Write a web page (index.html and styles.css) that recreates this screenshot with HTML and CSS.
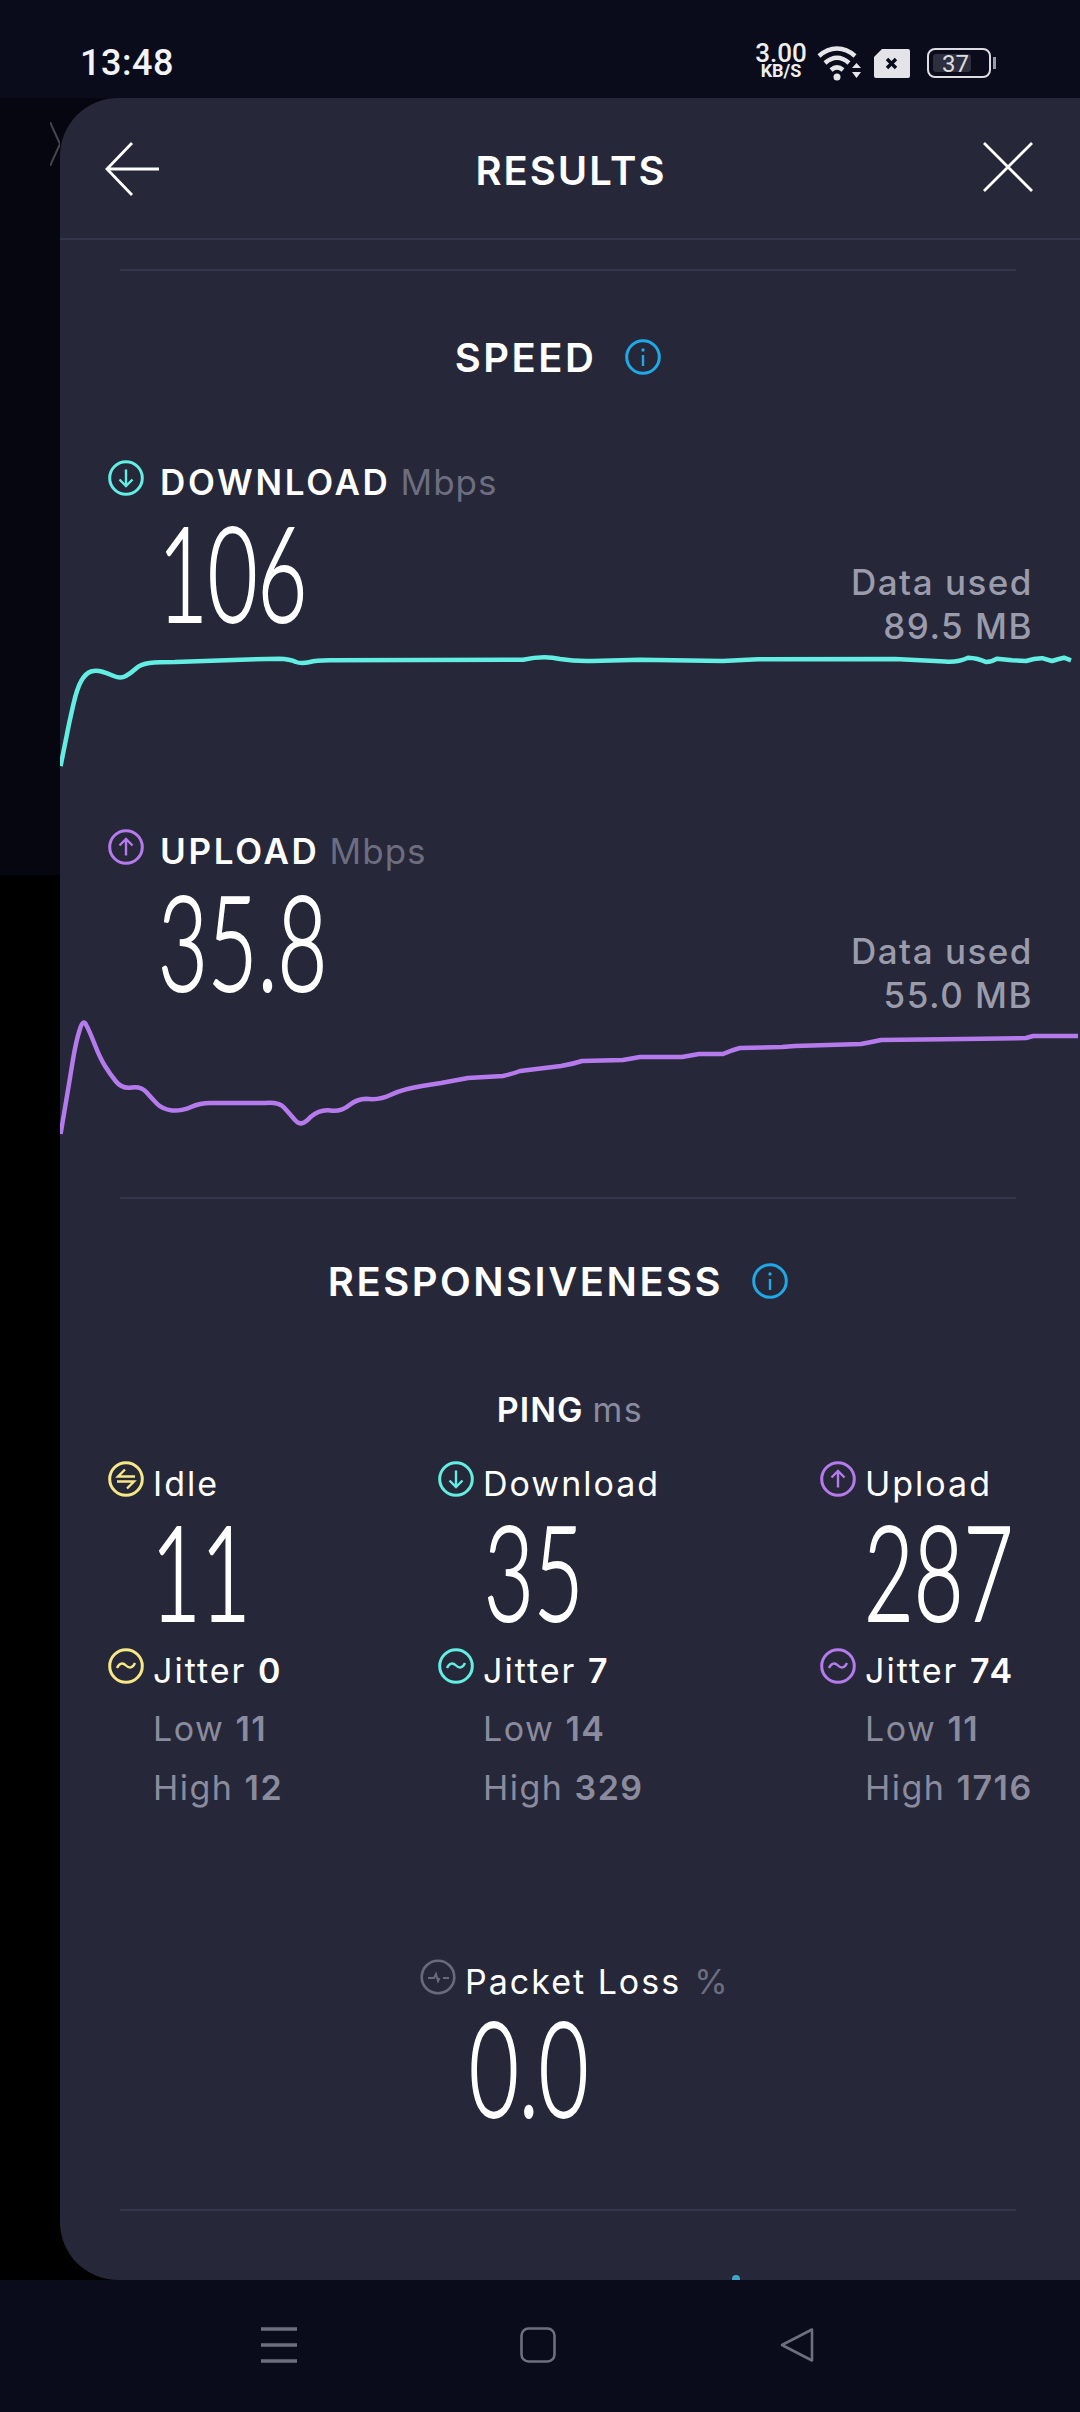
FILE: index.html
```html
<!DOCTYPE html>
<html lang="en">
<head>
  <meta charset="UTF-8" />
  <meta name="viewport" content="width=device-width, initial-scale=1" />
  <title>Results</title>
  <link rel="stylesheet" href="styles.css">
</head>
<body>

  <!-- icon set -->
  <svg class="defs" width="0" height="0">
    <symbol id="i-down" viewBox="0 0 36 36">
      <circle cx="18" cy="18" r="16.3" fill="none" stroke="currentColor" stroke-width="3"/>
      <path d="M18 9.5V26M11.5 19.5L18 26l6.5-6.5" fill="none" stroke="currentColor" stroke-width="2.4"/>
    </symbol>
    <symbol id="i-up" viewBox="0 0 36 36">
      <circle cx="18" cy="18" r="16.3" fill="none" stroke="currentColor" stroke-width="3"/>
      <path d="M18 26.5V10M11.5 16.5L18 10l6.5 6.5" fill="none" stroke="currentColor" stroke-width="2.4"/>
    </symbol>
    <symbol id="i-idle" viewBox="0 0 36 36">
      <circle cx="18" cy="18" r="16.3" fill="none" stroke="currentColor" stroke-width="3"/>
      <path d="M17 8.500L10 15.500H27M9 20.500H26L19 27.500" fill="none" stroke="currentColor" stroke-width="2.400"/>
    </symbol>
    <symbol id="i-jitter" viewBox="0 0 36 36">
      <circle cx="18" cy="18" r="16.3" fill="none" stroke="currentColor" stroke-width="3"/>
      <path d="M9 20c2.500-5.500 6-5.500 9-2.500s6.500 3 9-2.500" fill="none" stroke="currentColor" stroke-width="2.400"/>
    </symbol>
    <symbol id="i-loss" viewBox="0 0 36 36">
      <circle cx="18" cy="18" r="16.300" fill="none" stroke="currentColor" stroke-width="2.600"/>
      <path d="M8 19h6l2-4 2 7 1.500-3M23 19h6" fill="none" stroke="currentColor" stroke-width="2"/>
    </symbol>
    <symbol id="i-info" viewBox="0 0 36 36">
      <circle cx="18" cy="18" r="16.300" fill="none" stroke="currentColor" stroke-width="3"/>
      <path d="M18 16v11" fill="none" stroke="currentColor" stroke-width="2.400"/>
      <circle cx="18" cy="11" r="1.700" fill="currentColor"/>
    </symbol>
  </svg>

  <header class="status-bar">
    <span class="clock">13:48</span>
    <div class="status-icons">
      <div class="net-speed"><b>3.00</b><small>KB/S</small></div>
      <svg class="wifi" width="46" height="36" viewBox="0 0 46 36">
        <path d="M2 11C13 1 27 1 38 11" fill="none" stroke="#e6e6ea" stroke-width="4.500"/>
        <path d="M8 18c8-7 16-7 24 0" fill="none" stroke="#e6e6ea" stroke-width="4.500"/>
        <path d="M14 25c4-3.500 8-3.500 12 0" fill="none" stroke="#e6e6ea" stroke-width="4.500"/>
        <circle cx="20" cy="32" r="3.500" fill="#e6e6ea"/>
        <path d="M35 23l4.500-5 4.500 5zM35 27h9l-4.500 6z" fill="#e6e6ea"/>
      </svg>
      <svg class="sim" width="36" height="29" viewBox="0 0 36 29">
        <path d="M8 0H34a2 2 0 0 1 2 2V27a2 2 0 0 1-2 2H2a2 2 0 0 1-2-2V8z" fill="#e3e3e8"/>
        <path d="M13 10l9 9M22 10l-9 9" stroke="#0a0c1c" stroke-width="3.400"/>
      </svg>
      <div class="battery"><div class="battery-fill">37</div></div>
    </div>
  </header>

  <div class="stage">
    <svg class="ghost-x" width="10" height="44" viewBox="0 0 10 44">
      <path d="M0 0L20 44M0 44L20 0" stroke="#44454d" stroke-width="2"/>
    </svg>

    <main class="card">
      <div class="top-bar">
        <svg width="54" height="54" viewBox="0 0 54 54">
          <path d="M27 1L2 27L27 53M2 27H54" fill="none" stroke="#fff" stroke-width="2.800"/>
        </svg>
        <h1>RESULTS</h1>
        <svg width="50" height="50" viewBox="0 0 50 50">
          <path d="M1 1L49 49M49 1L1 49" fill="none" stroke="#fff" stroke-width="2.800"/>
        </svg>
      </div>

      <hr class="divider first" />

      <h2 class="section-title speed-title"><span>SPEED</span><svg class="info"><use href="#i-info"/></svg></h2>

      <section class="speed download">
        <div class="speed-info">
          <div>
            <div class="speed-label">
              <svg class="icon teal"><use href="#i-down"/></svg>
              <strong>DOWNLOAD</strong><span class="unit">Mbps</span>
            </div>
            <div class="big indent">106</div>
          </div>
          <div class="data-used">Data used<br>89.5 MB</div>
        </div>
        <svg class="chart" width="1020" height="120" viewBox="0 0 1020 120">
          <path class="chart-line line-teal" d="M0.600 115L9 73L13 55Q17 37 21.500 29.500Q26 22 31 20.500Q36 19 41.500 20.500Q47 22 53.750 25Q60.500 28 65.750 25Q71 22 76 17.500Q81 13 89.500 12Q98 11 115 11L181 8.700L219 7.700Q230 8 236 11Q241 13 250 11Q255 9.500 270 9.300L463 8.700Q484 4 500 8Q515 10.500 532 10L580 8.700L663 10L698 8.300L835 8L885 10.500Q898 11.500 908 6.700Q918 7 926 11Q932 11 937 7.700L952 9.300L966 10Q975 7 983 7.300L992 10Q998 8 1004 6.700L1011 9.300"/>
        </svg>
      </section>

      <section class="speed upload">
        <div class="speed-info">
          <div>
            <div class="speed-label">
              <svg class="icon purple"><use href="#i-up"/></svg>
              <strong>UPLOAD</strong><span class="unit">Mbps</span>
            </div>
            <div class="big indent">35.8</div>
          </div>
          <div class="data-used">Data used<br>55.0 MB</div>
        </div>
        <svg class="chart" width="1020" height="125" viewBox="0 0 1020 125">
          <path class="chart-line line-purple" d="M0.600 118L9 68L12.500 46.500Q16 25 19.500 14.500Q23 2 26.250 9Q29.500 15 34.750 28.500Q40 42 45 50Q50 58 56 65.500Q62 73 71.500 71.500Q81 70 86.250 76Q91.500 82 96.750 87.500Q102 93 112 94.500Q122.500 95 131 91Q140 87 150 87L205 87Q219 86 224 91.500Q229 97 235 104Q241 112 250.500 101Q260 93 270.500 94.500Q281 96 289.500 89Q298 82 309 83Q320 84 331.500 78.500Q343 73 362 70L381 67L408 62L443 60Q452 58 460 55L501 50Q513 48 522 45L563 44L580 41L622 41L639 38L663 38Q672 34 680 32L722 31L735 30L801 28Q812 26 821 24L904 23L966 22L973 20L1018 20"/>
        </svg>
      </section>

      <hr class="divider second" />

      <h2 class="section-title resp-title"><span>RESPONSIVENESS</span><svg class="info"><use href="#i-info"/></svg></h2>

      <div class="ping-title"><strong>PING</strong><span class="unit light">ms</span></div>

      <section class="ping-grid">
        <div class="ping-col">
          <div class="ping-row"><svg class="icon yellow"><use href="#i-idle"/></svg><span>Idle</span></div>
          <div class="big small-gap">11</div>
          <div class="ping-row"><svg class="icon yellow"><use href="#i-jitter"/></svg><span>Jitter <b>0</b></span></div>
          <div class="ping-sub">Low <b>11</b></div>
          <div class="ping-sub">High <b>12</b></div>
        </div>
        <div class="ping-col">
          <div class="ping-row"><svg class="icon teal"><use href="#i-down"/></svg><span>Download</span></div>
          <div class="big small-gap">35</div>
          <div class="ping-row"><svg class="icon teal"><use href="#i-jitter"/></svg><span>Jitter <b>7</b></span></div>
          <div class="ping-sub">Low <b>14</b></div>
          <div class="ping-sub">High <b>329</b></div>
        </div>
        <div class="ping-col">
          <div class="ping-row"><svg class="icon purple"><use href="#i-up"/></svg><span>Upload</span></div>
          <div class="big small-gap">287</div>
          <div class="ping-row"><svg class="icon purple"><use href="#i-jitter"/></svg><span>Jitter <b>74</b></span></div>
          <div class="ping-sub">Low <b>11</b></div>
          <div class="ping-sub">High <b>1716</b></div>
        </div>
      </section>

      <section class="loss">
        <div class="ping-row"><svg class="icon grey"><use href="#i-loss"/></svg><span>Packet Loss</span><span class="unit percent">%</span></div>
        <div class="big loss-value">0.0</div>
      </section>

      <hr class="divider third" />
      <span class="peek-dot"></span>
    </main>
  </div>

  <nav class="nav-bar">
    <svg width="36" height="36" viewBox="0 0 36 36">
      <path d="M0 2H36M0 18H36M0 34H36" stroke="#6d6f7d" stroke-width="3.400"/>
    </svg>
    <svg width="36" height="36" viewBox="0 0 36 36">
      <rect x="1.500" y="1.500" width="33" height="33" rx="7" fill="none" stroke="#6d6f7d" stroke-width="2.600"/>
    </svg>
    <svg width="36" height="36" viewBox="0 0 36 36">
      <path d="M33 2.500V33.500L3 18z" fill="none" stroke="#6d6f7d" stroke-width="2.600" stroke-linejoin="round"/>
    </svg>
  </nav>

</body>
</html>
```

FILE: styles.css
```css
* {
  box-sizing: border-box;
}

html, body {
  margin: 0;
  padding: 0;
}

body {
  width: 1080px;
  height: 2412px;
  display: flex;
  flex-direction: column;
  overflow: hidden;
  background: #000;
  color: #fff;
  font-family: Inter, "Open Sans", sans-serif;
}

.defs {
  position: absolute;
}

/* barra de status */
.status-bar {
  height: 98px;
  flex: none;
  background: #0a0c1c;
  display: flex;
  justify-content: space-between;
  padding: 40px 89px 0 80px;
}

.clock {
  font: 500 36px/46px Roboto, sans-serif;
  letter-spacing: 0.5px;
  color: #f4f4f6;
}

.status-icons {
  display: flex;
  align-items: flex-start;
}

.net-speed {
  width: 52px;
  margin-top: 3px;
  text-align: center;
  font-family: Roboto, sans-serif;
  color: #eee;
}

.net-speed b {
  display: block;
  font-size: 26px;
  font-weight: 500;
  line-height: 20px;
}

.net-speed small {
  display: block;
  font-size: 18px;
  font-weight: 700;
  line-height: 16px;
}

.wifi {
  margin: 5px 0 0 10px;
}

.sim {
  margin: 9px 0 0 11px;
}

.battery {
  position: relative;
  width: 64px;
  height: 30px;
  margin: 8px 0 0 17px;
  padding: 4px;
  border: 2.500px solid #dcdce2;
  border-radius: 8px;
}

.battery::after {
  content: "";
  position: absolute;
  right: -7px;
  top: 7px;
  width: 3px;
  height: 12px;
  background: #9a9ba6;
}

.battery-fill {
  width: 38px;
  height: 100%;
  background: #2d2f3e;
  border-radius: 3px;
  font: 400 24px/20px Roboto, sans-serif;
  color: #ddd;
  white-space: nowrap;
  text-indent: 9px;
}

/* area do cartao */
.stage {
  position: relative;
  flex: 1;
  padding-left: 60px;
  min-height: 0;
  background: linear-gradient(#05060f 0 777px, #000 777px);
}

.ghost-x {
  position: absolute;
  left: 50px;
  top: 24px;
}

.card {
  position: relative;
  height: 100%;
  overflow: hidden;
  background: #262739;
  border-radius: 58px 0 0 58px;
}

.top-bar {
  height: 142px;
  display: flex;
  align-items: flex-start;
  justify-content: space-between;
  padding: 44px 47px 0 45px;
  border-bottom: 2px solid #33354a;
}

.top-bar h1 {
  margin: 6px 0 0 0;
  font-size: 40px;
  font-weight: 600;
  line-height: 46px;
  letter-spacing: 2px;
}

.divider {
  height: 2px;
  margin: 0 64px 0 60px;
  border: none;
  background: #33354a;
}

.divider.first {
  margin-top: 29px;
}

.divider.second {
  margin-top: 56px;
}

.divider.third {
  margin-top: 93px;
}

.section-title {
  height: 36px;
  margin: 68px 24px 0 0;
  display: flex;
  align-items: center;
  justify-content: center;
  gap: 29px;
  font-size: 40px;
  font-weight: 600;
  letter-spacing: 2.500px;
}

.resp-title {
  margin-top: 64px;
}

.info {
  width: 36px;
  height: 36px;
  color: #1fa9e6;
}

.icon {
  width: 36px;
  height: 36px;
  flex: none;
}

.teal { color: #63eee3; }
.purple { color: #b57bec; }
.yellow { color: #f7e886; }
.grey { color: #696b7c; }

.speed-title {
  margin-bottom: 85px;
}

.speed-info {
  display: flex;
  justify-content: space-between;
  align-items: flex-end;
  padding: 0 47px 0 48px;
}

.speed-label {
  display: flex;
  align-items: center;
  height: 36px;
  font-size: 35px;
  letter-spacing: 2.700px;
  white-space: pre;
}

.speed-label .icon {
  margin-right: 16px;
}

.speed-label strong {
  margin-top: 8px;
  font-weight: 600;
}

.speed-label .unit {
  margin: 8px 0 0 10px;
  letter-spacing: 1px;
}

.unit {
  font-weight: 400;
  color: #6c6e80;
}

.unit.light {
  color: #8a8b9c;
}

.percent {
  margin-left: 4px;
}

.big {
  width: max-content;
  font-family: Lato, sans-serif;
  font-size: 132px;
  font-weight: 300;
  line-height: 100px;
  -webkit-text-stroke: 2px #fff;
  transform: scaleX(0.65);
  transform-origin: left center;
}

.indent {
  margin: 25px 0 0 50px;
}

.data-used {
  margin-bottom: -27px;
  font-size: 35px;
  font-weight: 500;
  letter-spacing: 1.500px;
  line-height: 44px;
  text-align: right;
  color: #9a9bab;
}

.chart {
  display: block;
  margin-top: 30px;
}

.upload .chart {
  margin-top: 26px;
}

.chart-line {
  fill: none;
  stroke-width: 4.500;
  stroke-linejoin: round;
}

.line-teal { stroke: #63eee3; }
.line-purple { stroke: #b57bec; }

.speed.upload {
  margin-top: 58px;
}

.ping-title {
  margin-top: 94px;
  height: 34px;
  display: flex;
  justify-content: center;
  gap: 9px;
  font-size: 34px;
  line-height: 34px;
  letter-spacing: 1.500px;
}

.ping-title strong {
  font-weight: 600;
  letter-spacing: 1px;
}

.ping-grid {
  margin-top: 38px;
  padding-left: 48px;
  display: grid;
  grid-template-columns: 330px 382px 1fr;
}

.ping-row {
  display: flex;
  align-items: center;
  height: 36px;
  gap: 9px;
  font-size: 34px;
  letter-spacing: 2px;
  white-space: pre;
}

.ping-row .icon {
  margin-top: -8px;
}

.ping-row b {
  font-weight: 600;
}

.small-gap {
  margin: 19px 0 32px 43px;
}

.ping-col:nth-child(2) .small-gap {
  margin-left: 46px;
}

.ping-col:nth-child(3) .small-gap {
  margin-left: 44px;
}

.ping-sub {
  height: 59px;
  padding: 23px 0 0 45px;
  font-size: 34px;
  letter-spacing: 1.500px;
  line-height: 36px;
  color: #8a8b9c;
  white-space: pre;
}

.ping-sub b {
  font-weight: 600;
}

.loss {
  margin-top: 157px;
  margin-left: 360px;
}

.loss-value {
  margin: 17px 0 0 49px;
}

.peek-dot {
  position: absolute;
  left: 672px;
  bottom: -3px;
  width: 8px;
  height: 8px;
  border-radius: 50%;
  background: #3fa5c9;
}

/* barra de navegacao */
.nav-bar {
  height: 132px;
  flex: none;
  background: #0a0c1c;
  display: flex;
  align-items: flex-start;
  padding: 47px 0 0 261px;
  gap: 223px;
}
```
